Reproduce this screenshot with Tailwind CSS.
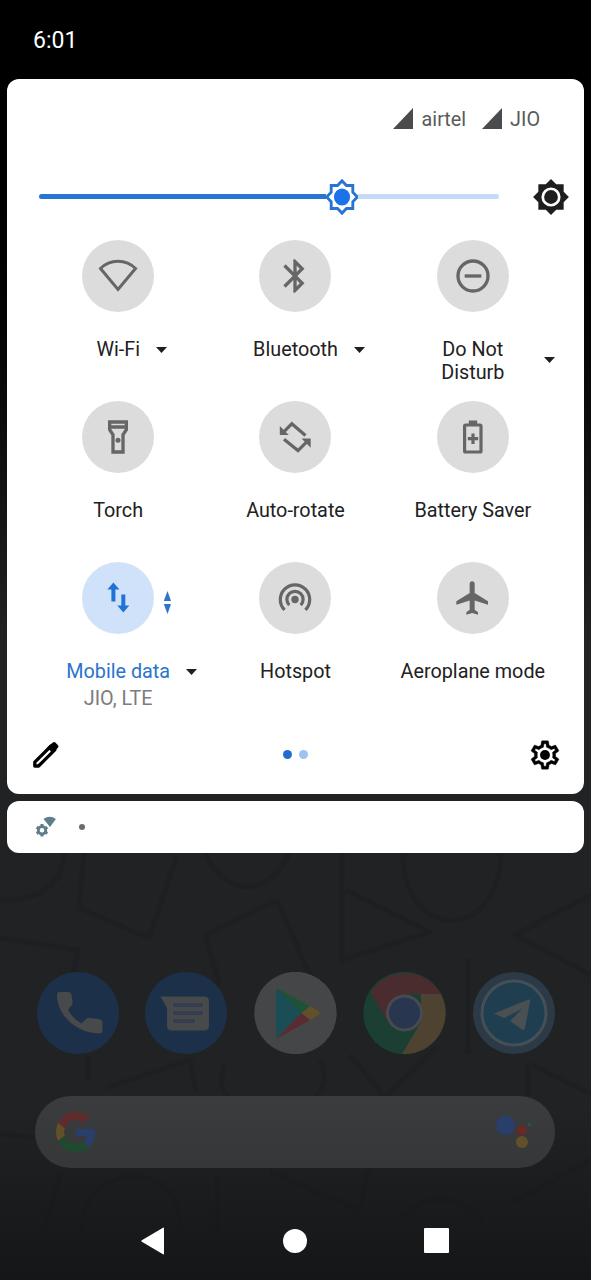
<!DOCTYPE html>
<html lang="en">
<head>
<meta charset="utf-8">
<title>Quick settings</title>
<script src="https://cdn.jsdelivr.net/npm/@tailwindcss/browser@4"></script>
</head>
<body class="bg-black">
<div class="relative isolate flex h-[1280px] w-[591px] flex-col overflow-hidden bg-linear-to-b from-black from-6% via-[#212224] via-50% to-[#212224] font-['Roboto',sans-serif] text-[19.8px] text-[#212121]">

  <!-- wallpaper line art -->
  <svg class="absolute inset-0 -z-10" width="591" height="1280" viewBox="0 0 591 1280" fill="none">
    <defs><linearGradient id="fade" x1="0" y1="0" x2="0" y2="1"><stop offset="0" stop-color="#151618" stop-opacity="0"/><stop offset="1" stop-color="#151618"/></linearGradient></defs>
    <g stroke="#1e1f21" stroke-width="5" stroke-linejoin="round" opacity=".75">
      <path d="M64 853c0 30-24 48-64 47M84 853l-5 55 70 30 28-82M205 853c20 45 65 45 84 0M403 853c0 90 96 90 98 0M342 850v110l88-28-84-42M277 900l-72 35 15 50M277 900l35 80M591 895l-76 40 76 40M0 938l78 12-6 30M468 958v96M350 1055l35 42 52-50M88 1080v-24M106 1088l84-28 6 32M225 1065c-8 20 0 30 4 32M320 1060c8 20 4 30-4 36M528 1064v32M530 1064l61 30M0 1134l34 3M217 1175v60M270 1172l90 38 8-40M85 1245c-20-80 95-95 95-18M400 1220c20-30 70-25 84 5M507 1205l84-45M60 1175l-18 60"/>
    </g>
    <rect y="1110" width="591" height="170" fill="url(#fade)"/>
  </svg>

  <header class="flex h-[79px] shrink-0 items-center pl-[33px] pt-1 text-[23px] text-white"><span>6:01</span></header>

  <section class="mx-[7px] flex h-[715px] shrink-0 flex-col rounded-xl bg-white">
    <!-- carriers -->
    <div class="flex h-20 items-center justify-end pr-11 pt-px text-[19.8px] text-[#5a5a5a]">
      <svg class="mr-[9px] -mt-[3px]" width="20" height="21"><path d="M20 0v21H0z" fill="#4b4b4b"/></svg><span>airtel</span>
      <svg class="ml-4 mr-2 -mt-[3px]" width="20" height="21"><path d="M20 0v21H0z" fill="#4b4b4b"/></svg><span>JIO</span>
    </div>

    <!-- brightness -->
    <div class="mt-[19px] flex h-[38px] items-center pl-8 pr-3.5">
      <div class="-mt-px flex w-[460px] items-center">
        <div class="h-[5px] w-[287px] rounded-l-full bg-[#2874d2]"></div>
        <svg class="-mx-0.5 shrink-0" width="36" height="38" viewBox="0 0 24 24" preserveAspectRatio="none">
          <path d="M19.200 9V4.800H15L12 1.800l-3 3H4.800V9l-3 3 3 3v4.200H9l3 3 3-3h4.200V15l3-3z" fill="#fff" stroke="#2874d2" stroke-width="1.900"/>
          <circle cx="12" cy="12" r="5.400" fill="#1a73e8"/>
        </svg>
        <div class="h-[5px] grow rounded-r-full bg-[#c3dbf6]"></div>
      </div>
      <svg class="ml-auto" width="38" height="38" viewBox="0 0 24 24" fill="#1f1f1f"><path d="M20 8.690V4h-4.690L12 .690 8.690 4H4v4.690L.690 12 4 15.310V20h4.690L12 23.310 15.310 20H20v-4.690L23.310 12z"/><circle cx="12" cy="12" r="5.200" fill="none" stroke="#fff" stroke-width="1.700"/></svg>
    </div>

    <!-- tiles -->
    <div class="mx-[22.5px] mt-[23.5px] grid h-[483px] grid-cols-3 grid-rows-3 text-center leading-[23px]">
      <div class="flex flex-col items-center">
        <div class="flex size-[72px] items-center justify-center rounded-full bg-[#dcdcdc]">
          <svg width="40" height="40" fill="none" stroke="#666" stroke-width="3"><path d="M2.500 12.500C12 2.800 28 2.800 37.500 12.500L20 33.500z"/></svg>
        </div>
        <div class="relative mt-[26.5px]">Wi-Fi<svg class="absolute left-full top-[9px] ml-4" width="11" height="6"><path d="M0 0h11L5.500 6z" fill="#1f1f1f"/></svg></div>
      </div>
      <div class="flex flex-col items-center">
        <div class="flex size-[72px] items-center justify-center rounded-full bg-[#dcdcdc]">
          <svg width="40" height="40" viewBox="0 0 24 24" fill="#666"><path d="M17.710 7.710L12 2h-1v7.590L6.410 5 5 6.410 10.590 12 5 17.590 6.410 19 11 14.410V22h1l5.710-5.710L13.410 12zM13 5.830l1.880 1.880L13 9.590zm1.880 10.460L13 18.170v-3.760z"/></svg>
        </div>
        <div class="relative mt-[26.5px]">Bluetooth<svg class="absolute left-full top-[9px] ml-4" width="11" height="6"><path d="M0 0h11L5.500 6z" fill="#1f1f1f"/></svg></div>
      </div>
      <div class="flex flex-col items-center">
        <div class="flex size-[72px] items-center justify-center rounded-full bg-[#dcdcdc]">
          <svg width="40" height="40" viewBox="0 0 24 24" fill="none" stroke="#666" stroke-width="2"><circle cx="12" cy="12" r="9"/><path d="M7 12h10"/></svg>
        </div>
        <div class="relative mt-[26.5px] w-[66px]">Do Not Disturb<svg class="absolute left-full top-[19px] ml-[38px]" width="11" height="6"><path d="M0 0h11L5.500 6z" fill="#1f1f1f"/></svg></div>
      </div>

      <div class="flex flex-col items-center">
        <div class="flex size-[72px] items-center justify-center rounded-full bg-[#dcdcdc]">
          <svg width="40" height="40" viewBox="0 0 24 24" fill="#666" fill-rule="evenodd"><path d="M6 2v6l2 3v11h8V11l2-3V2zm10 2v1H8V4zm-2 6.400V20h-4v-9.600l-2-3V7h8v.400z"/><circle cx="12" cy="14" r="1.500"/></svg>
        </div>
        <div class="mt-[26.5px]">Torch</div>
      </div>
      <div class="flex flex-col items-center">
        <div class="flex size-[72px] items-center justify-center rounded-full bg-[#dcdcdc]">
          <svg width="40" height="40" fill="none" stroke="#666" stroke-width="3.200"><path d="M30.500 18.500L16.800 6.800l-9 9M9 22.200l14 11.400 9.500-9.500"/><path d="M4.800 9v9h9zM26.500 21.500h9.200v9.200z" fill="#666" stroke="none"/></svg>
        </div>
        <div class="mt-[26.5px]">Auto-rotate</div>
      </div>
      <div class="flex flex-col items-center">
        <div class="flex size-[72px] items-center justify-center rounded-full bg-[#dcdcdc]">
          <svg width="40" height="40" fill="none" stroke="#666" stroke-width="3.200"><rect x="11.600" y="8" width="16.400" height="27" rx="1"/><path d="M15.800 5.500h8.400" stroke-width="4"/><path d="M20 16.500v10.500M14.800 21.700h10.400"/></svg>
        </div>
        <div class="mt-[26.5px] whitespace-nowrap">Battery Saver</div>
      </div>

      <div class="flex flex-col items-center">
        <div class="relative flex size-[72px] items-center justify-center rounded-full bg-[#d0e2fa]">
          <svg width="40" height="40" fill="#1f72d6"><path d="M15.400 4.500l6 7h-4v12h-4v-12h-4zM23.300 16.500h4v11h4l-6 7-6-7h4z"/></svg>
          <svg class="absolute left-full top-[29px] ml-[9px]" width="8" height="23" fill="#2c74cc"><path d="M4.500 0L8 10H.800zM.800 13H8L4.500 23z"/></svg>
        </div>
        <div class="relative mt-[26.5px] text-[#2a73cb]">Mobile data<svg class="absolute left-full top-[9px] ml-4" width="11" height="6"><path d="M0 0h11L5.500 6z" fill="#1f1f1f"/></svg></div>
        <div class="mt-1 text-[#7c7c7c]">JIO, LTE</div>
      </div>
      <div class="flex flex-col items-center">
        <div class="flex size-[72px] items-center justify-center rounded-full bg-[#dcdcdc]">
          <svg width="40" height="40" fill="none" stroke="#666" stroke-width="3.200"><circle cx="20" cy="21.500" r="3.700" fill="#666" stroke="none"/><path d="M9.600 31.900a14.700 14.700 0 1 1 20.800 0M14.300 27.200a8.100 8.100 0 1 1 11.400 0"/></svg>
        </div>
        <div class="mt-[26.5px]">Hotspot</div>
      </div>
      <div class="flex flex-col items-center">
        <div class="flex size-[72px] items-center justify-center rounded-full bg-[#dcdcdc]">
          <svg width="40" height="40" viewBox="0 0 24 24" fill="#666"><path d="M21 16v-2l-8-5V3.500C13 2.670 12.330 2 11.500 2S10 2.670 10 3.500V9l-8 5v2l8-2.500V19l-2 1.500V22l3.500-1 3.500 1v-1.500L13 19v-5.500z"/></svg>
        </div>
        <div class="mt-[26.5px] whitespace-nowrap">Aeroplane mode</div>
      </div>
    </div>

    <!-- footer -->
    <div class="mt-[14px] flex h-[36px] items-center justify-between pl-[25px] pr-[22px]">
      <svg width="28" height="28"><path d="M2.800 21.200L19 5l3.800 3.800L6.600 25H2.800z" fill="#fff" stroke="#000" stroke-width="3.300" stroke-linejoin="round"/><path d="M15.200 6.600l5.600-5.200q1.300-1 2.600.200l2.500 2.600q1.200 1.300 0 2.600l-5.400 5.400z"/></svg>
      <div class="ml-0.5 flex gap-[7px]"><i class="size-[9px] rounded-full bg-[#226dcb]"></i><i class="size-[9px] rounded-full bg-[#9dc3ef]"></i></div>
      <svg width="34" height="34" viewBox="0 0 24 24"><path d="M19.430 12.980c.040-.320.070-.640.070-.980s-.030-.660-.070-.980l2.110-1.650c.190-.150.240-.420.120-.640l-2-3.460c-.090-.160-.260-.250-.440-.250-.060 0-.120.010-.170.030l-2.490 1c-.520-.400-1.080-.730-1.690-.980l-.380-2.650C14.460 2.180 14.250 2 14 2h-4c-.250 0-.460.180-.490.420l-.380 2.650c-.610.250-1.170.590-1.690.980l-2.490-1c-.060-.020-.120-.030-.180-.030-.170 0-.340.090-.430.250l-2 3.460c-.130.220-.070.490.120.640l2.110 1.650c-.040.320-.070.650-.070.980s.030.660.070.980l-2.110 1.650c-.190.150-.240.420-.120.640l2 3.460c.090.160.260.250.440.250.060 0 .120-.010.170-.030l2.490-1c.520.400 1.080.730 1.690.980l.380 2.650c.030.240.240.420.490.420h4c.250 0 .460-.180.490-.420l.380-2.650c.610-.250 1.170-.590 1.690-.980l2.490 1c.060.020.120.030.180.030.170 0 .340-.090.430-.250l2-3.460c.120-.220.070-.490-.120-.640zm-1.980-1.710c.040.310.050.520.050.730s-.020.430-.050.730l-.140 1.130.890.700 1.080.840-.700 1.210-1.270-.510-1.040-.420-.900.680c-.430.320-.840.560-1.250.730l-1.060.430-.160 1.130-.200 1.350h-1.400l-.190-1.350-.160-1.130-1.060-.430c-.430-.180-.830-.410-1.230-.710l-.910-.700-1.060.430-1.270.510-.700-1.210 1.080-.840.890-.700-.140-1.130c-.030-.310-.050-.540-.050-.740s.020-.430.050-.730l.140-1.130-.890-.700-1.080-.840.700-1.210 1.270.510 1.040.420.900-.680c.430-.320.840-.560 1.250-.730l1.060-.430.160-1.130.200-1.350h1.390l.190 1.350.160 1.130 1.060.430c.430.180.830.410 1.230.710l.910.700 1.060-.430 1.270-.510.700 1.210-1.070.850-.890.700z" stroke="#000" stroke-width=".3"/><circle cx="12" cy="12" r="3.500"/></svg>
    </div>
  </section>

  <!-- notification -->
  <section class="mx-[7px] mt-[7px] flex h-[52px] shrink-0 items-center rounded-xl bg-white pl-7">
    <svg width="22" height="22" fill="#607d8b"><path d="M8.500 3q6.200-4.500 12.400 0L15 11z"/><circle cx="7" cy="14.300" r="3.700" fill="none" stroke="#607d8b" stroke-width="2.800"/><path d="M7 8v2.400M7 18.100V20.500M1.600 11.200l2.100 1.200M10.300 16.200l2.100 1.200M12.400 11.200l-2.100 1.200M3.700 16.200l-2.100 1.200" stroke="#607d8b" stroke-width="3"/></svg>
    <i class="ml-[22px] size-1.5 rounded-full bg-[#6b6b6b]"></i>
  </section>

  <!-- dock -->
  <div class="mt-[118.5px] flex shrink-0 justify-between pl-[37px] pr-[36.5px]">
    <svg width="82" height="82" viewBox="0 0 82 82"><circle cx="41" cy="41" r="41" fill="#1c3149"/><path d="M20 23q0-3 3-3h8q3 0 3.500 3l1 7q.300 2-1 3.500L31 38q5 9 13.500 13.500l4.500-4.500q1.500-1.300 3.500-1l9 1q4 .500 4 3.500V58q0 3.500-3.500 3.500C38 61 20 42 20 23z" fill="#47494a"/></svg>
    <svg width="82" height="82" viewBox="0 0 82 82"><circle cx="41" cy="41" r="41" fill="#1c3149"/><path d="M15.500 24.500H59q5 0 5 5v24q0 5-5 5H27q-5 0-5-5V36z" fill="#47494a"/><path d="M28 33h30M28 41h30M28 49h22" stroke="#353e50" stroke-width="4"/></svg>
    <svg width="83" height="82" viewBox="0 0 83 82"><circle cx="41.500" cy="41" r="41.200" fill="#454647"/><path d="M22 16v50l27-25z" fill="#1b4d56"/><path d="M22 16l34 18-8.500 7z" fill="#1d5138"/><path d="M22 67l34-19-8.500-7z" fill="#5a2b31"/><path d="M56 34l8.500 5q2.500 2 0 4L56 48l-8.500-7z" fill="#615029"/></svg>
    <svg width="83" height="82" viewBox="0 0 83 82"><circle cx="41.500" cy="41" r="41.200" fill="#1b3f33"/><path d="M7.500 20.500A41.200 41.200 0 0 1 78 22H41.500L25 50z" fill="#4b2c2e"/><path d="M78 22A41.200 41.200 0 0 1 39 82L58 50V22z" fill="#4e4330"/><circle cx="41.500" cy="41" r="18.500" fill="#484a50"/><circle cx="41.500" cy="41" r="15.500" fill="#29364f"/></svg>
    <svg width="82" height="82" viewBox="0 0 82 82"><circle cx="41" cy="41" r="41" fill="#2b3a46"/><circle cx="41" cy="41" r="32" fill="#1f3f50" stroke="#444f56" stroke-width="3"/><path d="M21 41.500L55.500 27.500q2-.500 1.500 2L52 56q-.800 3-3 1.500L37 49l12-12-18 9z" fill="#4a4f52"/></svg>
  </div>

  <!-- search -->
  <div class="ml-[35px] mr-9 mt-[42.5px] flex h-[72px] shrink-0 items-center justify-between rounded-full bg-linear-to-b from-[#3b3c3d] to-[#363739] pl-[21px] pr-[22px]">
    <svg width="40" height="40" viewBox="0 0 48 48"><path fill="#602b2b" d="M24 9.500c3.540 0 6.710 1.220 9.210 3.600l6.850-6.850C35.900 2.380 30.470 0 24 0 14.620 0 6.510 5.380 2.560 13.220l7.980 6.190C12.430 13.720 17.740 9.500 24 9.500z"/><path fill="#293e68" d="M46.980 24.550c0-1.570-.150-3.090-.380-4.550H24v9.020h12.940c-.580 2.960-2.260 5.480-4.780 7.180l7.730 6c4.510-4.180 7.090-10.360 7.090-17.650z"/><path fill="#61502a" d="M10.530 28.590c-.480-1.450-.760-2.990-.760-4.590s.270-3.140.760-4.590l-7.980-6.190C.920 16.460 0 20.120 0 24c0 3.880.920 7.540 2.560 10.780z"/><path fill="#204a30" d="M24 48c6.480 0 11.930-2.130 15.890-5.810l-7.730-6c-2.150 1.450-4.920 2.300-8.160 2.300-6.260 0-11.570-4.220-13.470-9.910l-7.980 6.190C6.510 42.620 14.620 48 24 48z"/></svg>
    <svg width="38" height="38"><circle cx="10.500" cy="12.500" r="9.700" fill="#293e68"/><circle cx="26.800" cy="17.500" r="5" fill="#692927"/><circle cx="34.500" cy="11.500" r="2" fill="#2c5042"/><circle cx="27" cy="29" r="6" fill="#61502a"/></svg>
  </div>

  <!-- navigation -->
  <nav class="mt-auto flex h-[79px] items-center justify-between pl-[141px] pr-[142px]">
    <svg width="24" height="28" fill="#fff"><path d="M22 .800q1-.600 1 .700v25q0 1.300-1 .700L.800 14.800q-1-.800 0-1.600z"/></svg>
    <i class="size-6 rounded-full bg-white"></i>
    <i class="size-[25px] rounded-[1px] bg-white"></i>
  </nav>
</div>
</body>
</html>
